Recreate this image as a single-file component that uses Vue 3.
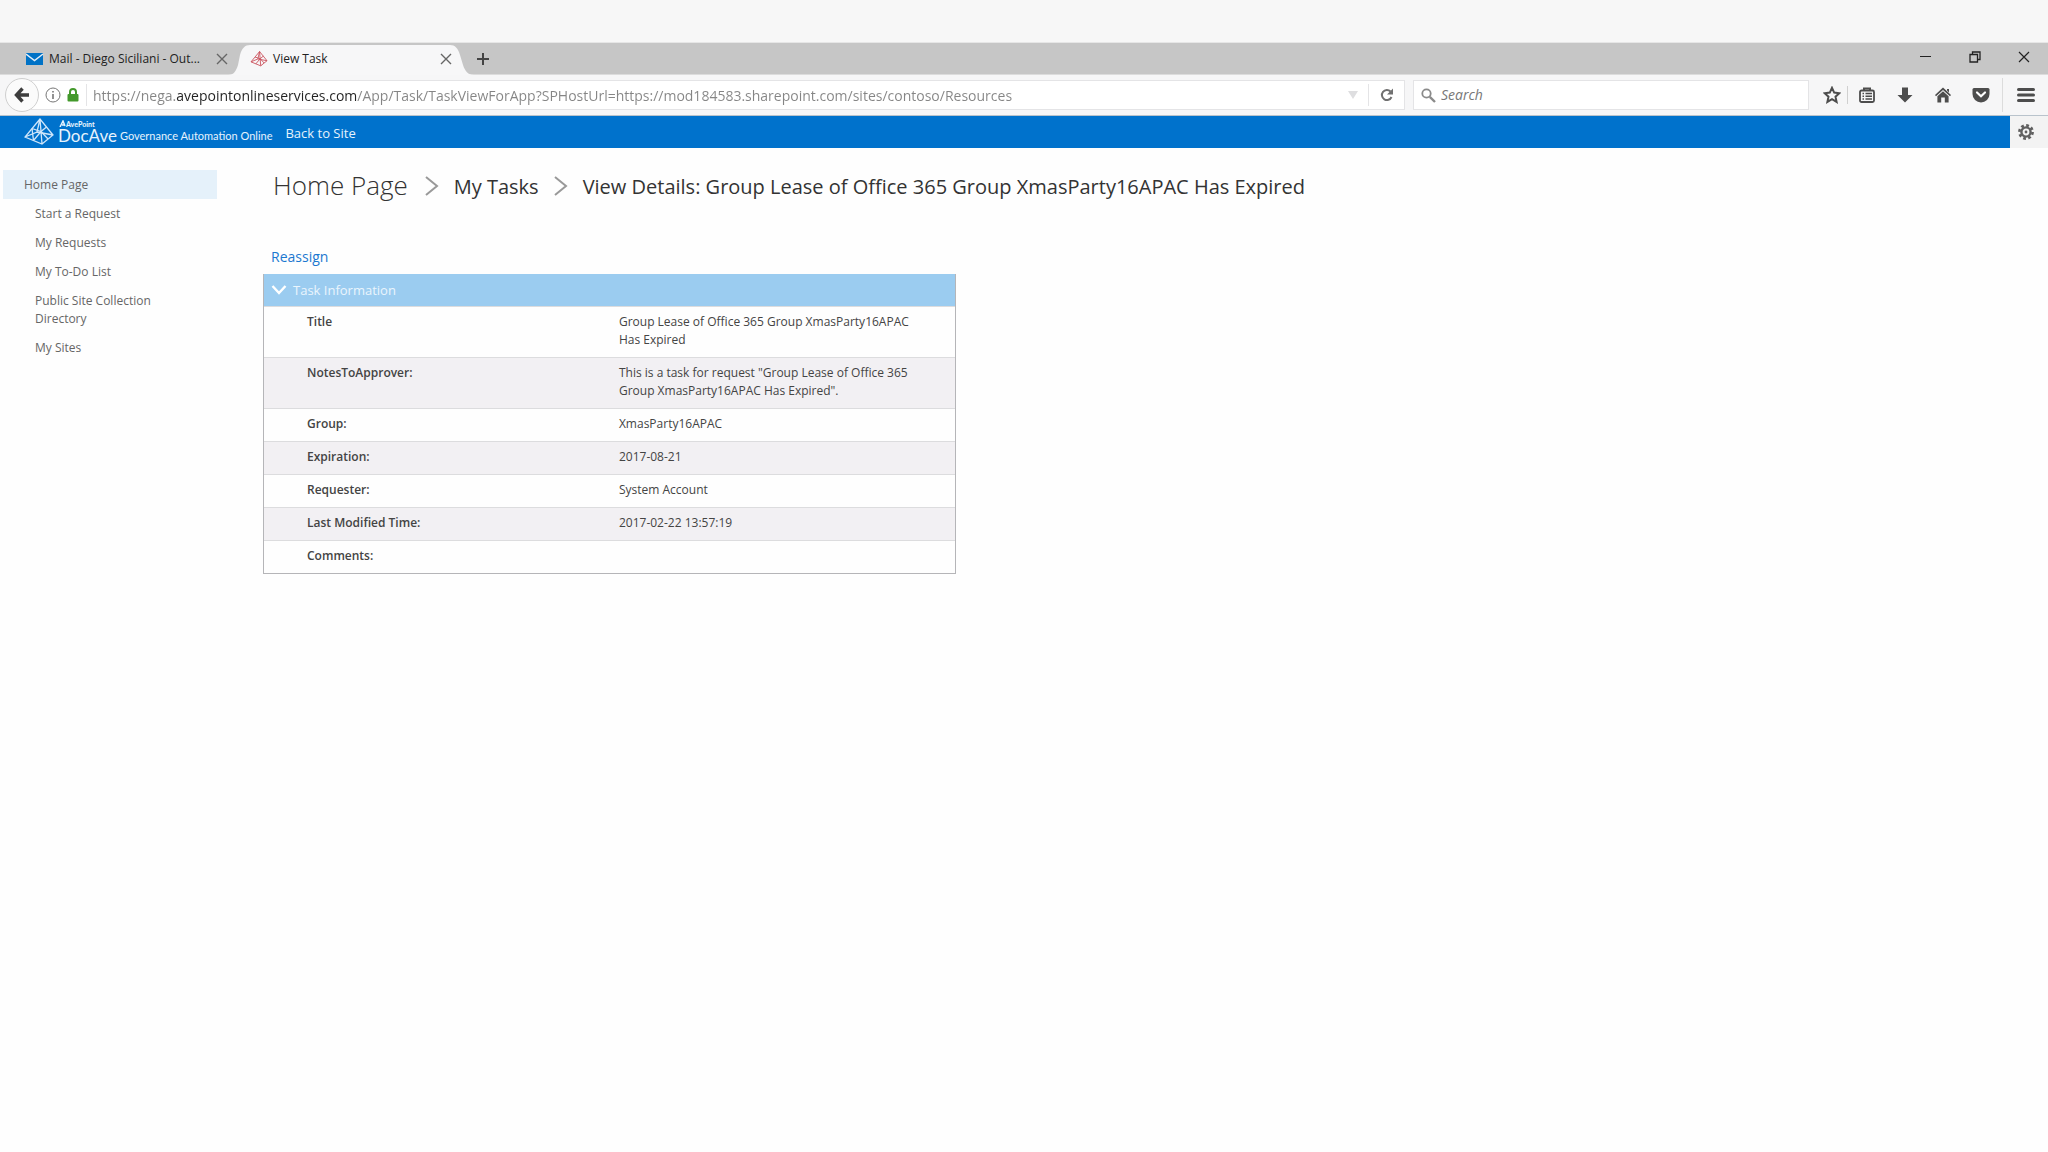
<script setup>
import { computed, ref } from "vue";

const url = ref(
  "https://nega.avepointonlineservices.com/App/Task/TaskViewForApp?SPHostUrl=https://mod184583.sharepoint.com/sites/contoso/Resources"
);
const search = ref("");
const open = ref(true);

// the registered domain is drawn darker than the rest of the address
const ctx = document.createElement("canvas").getContext("2d");
const domain = computed(() => {
  ctx.font = '14px "Open Sans"';
  const host = url.value.split("/").slice(0, 3).join("/");
  const name = host.split(/[./]/).slice(-2).join(".");
  const end = ctx.measureText(host).width;
  return {
    "--start": end - ctx.measureText(name).width + 6 + "px",
    "--end": end + 6 + "px",
  };
});

const links = [
  "Start a Request",
  "My Requests",
  "My To-Do List",
  "Public Site Collection Directory",
  "My Sites",
];

const rows = [
  { label: "Title", value: "Group Lease of Office 365 Group XmasParty16APAC Has Expired" },
  {
    label: "NotesToApprover:",
    value: 'This is a task for request "Group Lease of Office 365 Group XmasParty16APAC Has Expired".',
  },
  { label: "Group:", value: "XmasParty16APAC" },
  { label: "Expiration:", value: "2017-08-21" },
  { label: "Requester:", value: "System Account" },
  { label: "Last Modified Time:", value: "2017-02-22 13:57:19" },
  { label: "Comments:", value: "" },
];
</script>

<template>
  <div class="window">
    <div class="desktop"></div>
    <div class="tabs">
      <div class="tab">
        <svg class="favicon" width="18" height="14" viewBox="0 0 18 14">
          <rect y="1" width="17" height="12" fill="#0072c6" />
          <path d="M0 2 L8.5 8.5 L17 2" fill="none" stroke="#e4eef7" stroke-width="1.4" />
        </svg>
        <span class="tab-title">Mail - Diego Siciliani - Out...</span>
        <button class="tab-close" aria-label="Close tab">
          <svg width="12" height="12" viewBox="0 0 12 12">
            <path d="M1 1 L11 11 M11 1 L1 11" stroke="#666" stroke-width="1.4" />
          </svg>
        </button>
      </div>
      <div class="tab active">
        <svg class="tab-shape" width="246" height="30" viewBox="0 0 246 30">
          <path
            d="M0 30 C6 30 8 26 10 20 L12 10 C14 3 17 0 22 0 L222 0 C227 0 230 3 232 10 L235 20 C237 26 240 30 246 30 Z"
            fill="#f7f7f8"
          />
        </svg>
        <svg class="favicon" width="18" height="16" viewBox="0 0 30 28" fill="none" stroke="#cc5560" stroke-width="1.6">
          <path d="M16 1 L1 19 L18 26 L29 17 Z M16 1 L18 26 M16 1 L13 14 L1 19 M13 14 L29 17" />
          <path d="M8 10.5 L17 13.5 L22.5 9 M17 13.5 L9.5 22.5 M17 13.5 L24 21" />
        </svg>
        <span class="tab-title">View Task</span>
        <button class="tab-close" aria-label="Close tab">
          <svg width="12" height="12" viewBox="0 0 12 12">
            <path d="M1 1 L11 11 M11 1 L1 11" stroke="#666" stroke-width="1.4" />
          </svg>
        </button>
      </div>
      <button class="new-tab" aria-label="New tab">
        <svg width="14" height="14" viewBox="0 0 14 14">
          <path d="M7 1 V13 M1 7 H13" stroke="#444" stroke-width="2" />
        </svg>
      </button>
      <div class="window-buttons">
        <button aria-label="Minimize">
          <svg width="12" height="12" viewBox="0 0 12 12">
            <path d="M0 5.5 H11" stroke="#222" />
          </svg>
        </button>
        <button aria-label="Restore">
          <svg width="12" height="12" viewBox="0 0 12 12" fill="none" stroke="#222" stroke-width="1.3">
            <path d="M1 3.5 H8.5 V11 H1 Z M3.5 3.5 V1 H11 V8.5 H8.5" />
          </svg>
        </button>
        <button aria-label="Close">
          <svg width="12" height="12" viewBox="0 0 12 12">
            <path d="M1 1 L11 11 M11 1 L1 11" stroke="#222" stroke-width="1.2" />
          </svg>
        </button>
      </div>
    </div>

    <div class="toolbar">
      <button class="back" aria-label="Back">
        <svg width="16" height="16" viewBox="0 0 16 16" fill="none" stroke="#3d3d3d" stroke-width="3.4">
          <path d="M8.5 1.5 L2.5 8 L8.5 14.5 M3 8 H15" />
        </svg>
      </button>
      <div class="url-box">
        <svg width="16" height="16" viewBox="0 0 16 16" fill="none" stroke="#777">
          <circle cx="8" cy="8" r="7" />
          <path d="M8 7 V12 M8 4 V5.5" stroke-width="1.6" />
        </svg>
        <svg class="lock" width="12" height="14" viewBox="0 0 12 14">
          <path d="M3 7 V4 a3 3 0 0 1 6 0 V7" fill="none" stroke="#43992b" stroke-width="2" />
          <rect x="0.5" y="6" width="11" height="7.5" rx="1" fill="#43992b" />
        </svg>
        <input v-model="url" class="url" :style="domain" type="text" aria-label="Address" spellcheck="false" />
        <svg width="10" height="8" viewBox="0 0 10 8"><path d="M0 0 H10 L5 8 Z" fill="#dedee0" /></svg>
        <button class="reload" aria-label="Reload">
          <svg width="14" height="14" viewBox="0 0 14 14">
            <path d="M10.5 3.5 A5 5 0 1 0 11.5 9" fill="none" stroke="#707070" stroke-width="2" />
            <path d="M13 0.5 V6.5 H7 Z" fill="#707070" />
          </svg>
        </button>
      </div>
      <label class="search-box">
        <svg width="15" height="15" viewBox="0 0 15 15" fill="none" stroke="#8a8a8a">
          <circle cx="5.5" cy="5.5" r="4.2" stroke-width="1.8" />
          <path d="M8.8 8.8 L14 14" stroke-width="2.4" />
        </svg>
        <input v-model="search" type="text" placeholder="Search" aria-label="Search" />
      </label>
      <div class="tools">
        <button class="star" aria-label="Bookmark">
          <svg width="18" height="18" viewBox="0 0 18 18">
            <path
              d="M9 1.8 L11.2 6.6 L16.4 7.2 L12.5 10.7 L13.6 15.9 L9 13.2 L4.4 15.9 L5.5 10.7 L1.6 7.2 L6.8 6.6 Z"
              fill="none" stroke="#4d4d4d" stroke-width="2"
            />
          </svg>
        </button>
        <button aria-label="Bookmarks list">
          <svg width="16" height="16" viewBox="0 0 16 16" fill="none" stroke="#4d4d4d">
            <rect x="1" y="3.5" width="14" height="11.5" rx="1.5" stroke-width="1.8" />
            <path d="M5 3 V1.5 H11 V3" stroke-width="2" />
            <path d="M3.5 6.5 H5 M6.5 6.5 H13 M3.5 9.3 H5 M6.5 9.3 H13 M3.5 12 H5 M6.5 12 H13" stroke-width="1.4" />
          </svg>
        </button>
        <button aria-label="Downloads">
          <svg width="16" height="16" viewBox="0 0 16 16">
            <path d="M5 0.5 H11 V8 H15.5 L8 15.5 L0.5 8 H5 Z" fill="#4d4d4d" />
          </svg>
        </button>
        <button aria-label="Home">
          <svg width="16" height="16" viewBox="0 0 16 16" fill="#4d4d4d">
            <path d="M8 0.5 L16 8 L15 9.3 L8 3 L1 9.3 L0 8 Z M12 2 H14 V5.5 L12 3.6 Z" />
            <path d="M8 4.2 L13.6 9.2 V15.5 H9.8 V10.5 H6.2 V15.5 H2.4 V9.2 Z" />
          </svg>
        </button>
        <button aria-label="Save to Pocket">
          <svg width="18" height="16" viewBox="0 0 18 16">
            <path d="M2 1 H16 Q17.5 1 17.5 2.5 V7 A8.5 8.5 0 0 1 0.5 7 V2.5 Q0.5 1 2 1 Z" fill="#4d4d4d" />
            <path d="M5 5.5 L9 9.3 L13 5.5" fill="none" stroke="#fff" stroke-width="2.2" stroke-linecap="round" />
          </svg>
        </button>
      </div>
      <button class="menu" aria-label="Menu">
        <svg width="18" height="16" viewBox="0 0 18 16">
          <path d="M1.5 2.5 H16.5 M1.5 8 H16.5 M1.5 13.5 H16.5" stroke="#4d4d4d" stroke-width="3" stroke-linecap="round" />
        </svg>
      </button>
    </div>

    <header class="header">
      <svg width="30" height="28" viewBox="0 0 30 28" fill="none" stroke="#cfe6fa" stroke-width="1.3">
        <path d="M16 1 L1 19 L18 26 L29 17 Z M16 1 L18 26 M16 1 L13 14 L1 19 M13 14 L29 17" />
        <path d="M8 10.5 L17 13.5 L22.5 9 M17 13.5 L9.5 22.5 M17 13.5 L24 21 M8 10.5 L9.5 22.5" />
      </svg>
      <div class="logo">
        <span class="avepoint">
          <svg width="7" height="7" viewBox="0 0 7 7" fill="none" stroke="#e6f3fd" stroke-width="1.5">
            <path d="M1 7 L4 1 L6 6 M3 5 H6" />
          </svg>
          AvePoint
        </span>
        <span class="docave">DocAve</span>
      </div>
      <span class="product">Governance Automation Online</span>
      <a class="back-link" href="#">Back to Site</a>
      <button class="settings" aria-label="Settings">
        <svg width="16" height="16" viewBox="0 0 16 16" fill="none" stroke="#606060">
          <circle cx="8" cy="8" r="6.6" stroke-width="2.6" stroke-dasharray="2.8 2.38" />
          <circle cx="8" cy="8" r="4.6" stroke-width="2.4" />
          <circle cx="8" cy="8" r="1.4" fill="#606060" stroke="none" />
        </svg>
      </button>
    </header>

    <div class="page">
      <nav class="sidebar">
        <a class="home" href="#">Home Page</a>
        <a v-for="link in links" :key="link" href="#">{{ link }}</a>
      </nav>
      <main class="main">
        <div class="breadcrumb">
          <a class="root" href="#">Home Page</a>
          <svg width="14" height="20" viewBox="0 0 14 20"><path d="M1 1 L12 10 L1 19" /></svg>
          <a class="crumb" href="#">My Tasks</a>
          <svg width="14" height="20" viewBox="0 0 14 20"><path d="M1 1 L12 10 L1 19" /></svg>
          <span class="crumb">View Details: Group Lease of Office 365 Group XmasParty16APAC Has Expired</span>
        </div>
        <a class="reassign" href="#">Reassign</a>
        <section class="panel">
          <button class="panel-header" @click="open = !open">
            <svg width="16" height="12" viewBox="0 0 16 12">
              <path d="M1.5 2 L8 9 L14.5 2" fill="none" stroke="#fff" stroke-width="2.4" />
            </svg>
            Task Information
          </button>
          <table v-if="open">
            <tbody>
              <tr v-for="row in rows" :key="row.label">
                <th scope="row">{{ row.label }}</th>
                <td>{{ row.value }}</td>
              </tr>
            </tbody>
          </table>
        </section>
      </main>
    </div>
  </div>
</template>

<style>
body {
  background: #fefefe;
}
</style>

<style scoped>
.window {
  font-family: "Open Sans", "Noto Sans", sans-serif;
  font-size: 12px;
  line-height: 18px;
  color: #444;
}
button {
  display: flex;
  align-items: center;
  justify-content: center;
  padding: 0;
  border: 0;
  background: none;
  font: inherit;
  cursor: pointer;
}
input {
  min-width: 0;
  padding: 0;
  border: 0;
  outline: 0;
  background: none;
  font: inherit;
}
a {
  color: inherit;
  text-decoration: none;
}
svg {
  flex: none;
}
.desktop {
  height: 42px;
  background: #f7f7f7;
}
.tabs {
  display: flex;
  box-sizing: border-box;
  height: 33px;
  border-top: 1px solid #e6e6e6;
  border-bottom: 1px solid #dcdcdc;
  background: #c6c6c6;
}
.tab {
  display: flex;
  align-items: center;
  box-sizing: border-box;
  width: 232px;
  padding-left: 26px;
  padding-right: 4px;
  color: #222;
}
.tab-title {
  flex: 1;
  margin-left: 5px;
  white-space: nowrap;
}
.tab-close {
  width: 12px;
}
.active {
  position: relative;
  width: 240px;
  padding-left: 18px;
  padding-right: 20px;
}
.tab-shape {
  position: absolute;
  left: -4px;
  bottom: -1px;
}
.active .favicon,
.active .tab-title,
.active .tab-close {
  position: relative;
}
.new-tab {
  width: 22px;
}
.window-buttons {
  display: flex;
  margin-left: auto;
}
.window-buttons button {
  width: 49px;
  height: 28px;
}
.toolbar {
  display: flex;
  align-items: center;
  height: 40px;
  border-bottom: 1px solid #b9c3cc;
  background: #f6f6f7;
}
.back {
  position: relative;
  box-sizing: border-box;
  width: 34px;
  height: 34px;
  margin-left: 5px;
  border: 1px solid #cfcfcf;
  border-radius: 50%;
  background: #fbfbfb;
}
.url-box,
.search-box {
  display: flex;
  align-items: center;
  box-sizing: border-box;
  height: 30px;
  border: 1px solid #e4e4e6;
  background: #fff;
  font-size: 14px;
}
.url-box {
  flex: 1;
  margin-left: -8px;
  padding-left: 13px;
}
.lock {
  margin-left: 6px;
}
.url {
  flex: 1;
  height: 22px;
  margin-left: 7px;
  padding-left: 6px;
  border-left: 1px solid #e4e4e6;
  background: linear-gradient(
    90deg,
    #858585 var(--start),
    #222 var(--start),
    #222 var(--end),
    #858585 var(--end)
  );
  -webkit-background-clip: text;
  background-clip: text;
  color: transparent;
}
.reload {
  width: 36px;
  height: 22px;
  margin-left: 10px;
  border-left: 1px solid #e4e4e6;
}
.search-box {
  width: 396px;
  margin-left: 8px;
  padding-left: 7px;
}
.search-box input {
  flex: 1;
  margin-left: 5px;
}
.search-box input::placeholder {
  color: #777;
  font-style: italic;
}
.tools {
  display: flex;
  margin-left: 7px;
  padding-right: 2px;
}
.tools button {
  width: 38px;
  height: 18px;
}
.tools .star {
  width: 32px;
  border-right: 1px solid #d0d0d0;
}
.menu {
  width: 46px;
  height: 34px;
  border-left: 1px solid #dcdcdc;
}
.header {
  display: flex;
  align-items: center;
  height: 32px;
  padding-left: 24px;
  background: #0072cc;
  color: #e6f3fd;
}
.logo {
  display: flex;
  flex-direction: column;
  margin-left: 4px;
  font-family: Lato, sans-serif;
}
.avepoint {
  display: flex;
  margin-left: 1px;
  font-size: 7px;
  font-weight: 900;
  line-height: 8px;
}
.docave {
  font-size: 17px;
  line-height: 16px;
}
.product {
  align-self: flex-end;
  margin-left: 3px;
  padding-bottom: 3px;
  font-family: Lato, sans-serif;
  font-size: 11px;
}
.back-link {
  margin-left: 13px;
  padding-top: 2px;
  font-size: 13px;
}
.settings {
  align-self: stretch;
  width: 38px;
  margin-left: auto;
  padding-right: 6px;
  background: #f3f3f3;
}
.page {
  display: flex;
  padding-top: 22px;
}
.sidebar {
  display: flex;
  flex-direction: column;
  width: 214px;
  margin-left: 3px;
  color: #666;
}
.sidebar a {
  padding: 6px 32px 5px;
}
.sidebar .home {
  padding-left: 21px;
  background: #e5f1fa;
}
.main {
  flex: 1;
  margin-left: 46px;
}
.breadcrumb {
  display: flex;
  align-items: center;
  gap: 15px;
  height: 32px;
  padding-left: 10px;
  font-size: 20px;
  color: #333;
}
.root {
  padding-bottom: 2px;
  padding-right: 2px;
  font-size: 26px;
  font-weight: 300;
}
.crumb {
  padding-top: 2px;
}
.breadcrumb path {
  fill: none;
  stroke: #999;
  stroke-width: 2;
}
.reassign {
  display: block;
  width: max-content;
  margin: 46px 0 8px 8px;
  font-size: 14px;
  color: #1b78d0;
}
.panel {
  box-sizing: border-box;
  width: 693px;
  border: 1px solid #b5b5b8;
  border-top: 0;
}
.panel-header {
  justify-content: flex-start;
  gap: 6px;
  width: 100%;
  height: 32px;
  padding-left: 7px;
  background: #9bccf0;
  color: #eaf5fd;
  font-size: 13px;
}
table {
  width: 100%;
  border-collapse: collapse;
}
th,
td {
  padding: 6px 36px 8px 44px;
  text-align: left;
  vertical-align: top;
}
th {
  width: 45%;
  padding-left: 43px;
  font-weight: 600;
}
tr {
  border-top: 1px solid #dcdcde;
}
tr:nth-child(even) {
  background: #f2f0f3;
}
</style>
